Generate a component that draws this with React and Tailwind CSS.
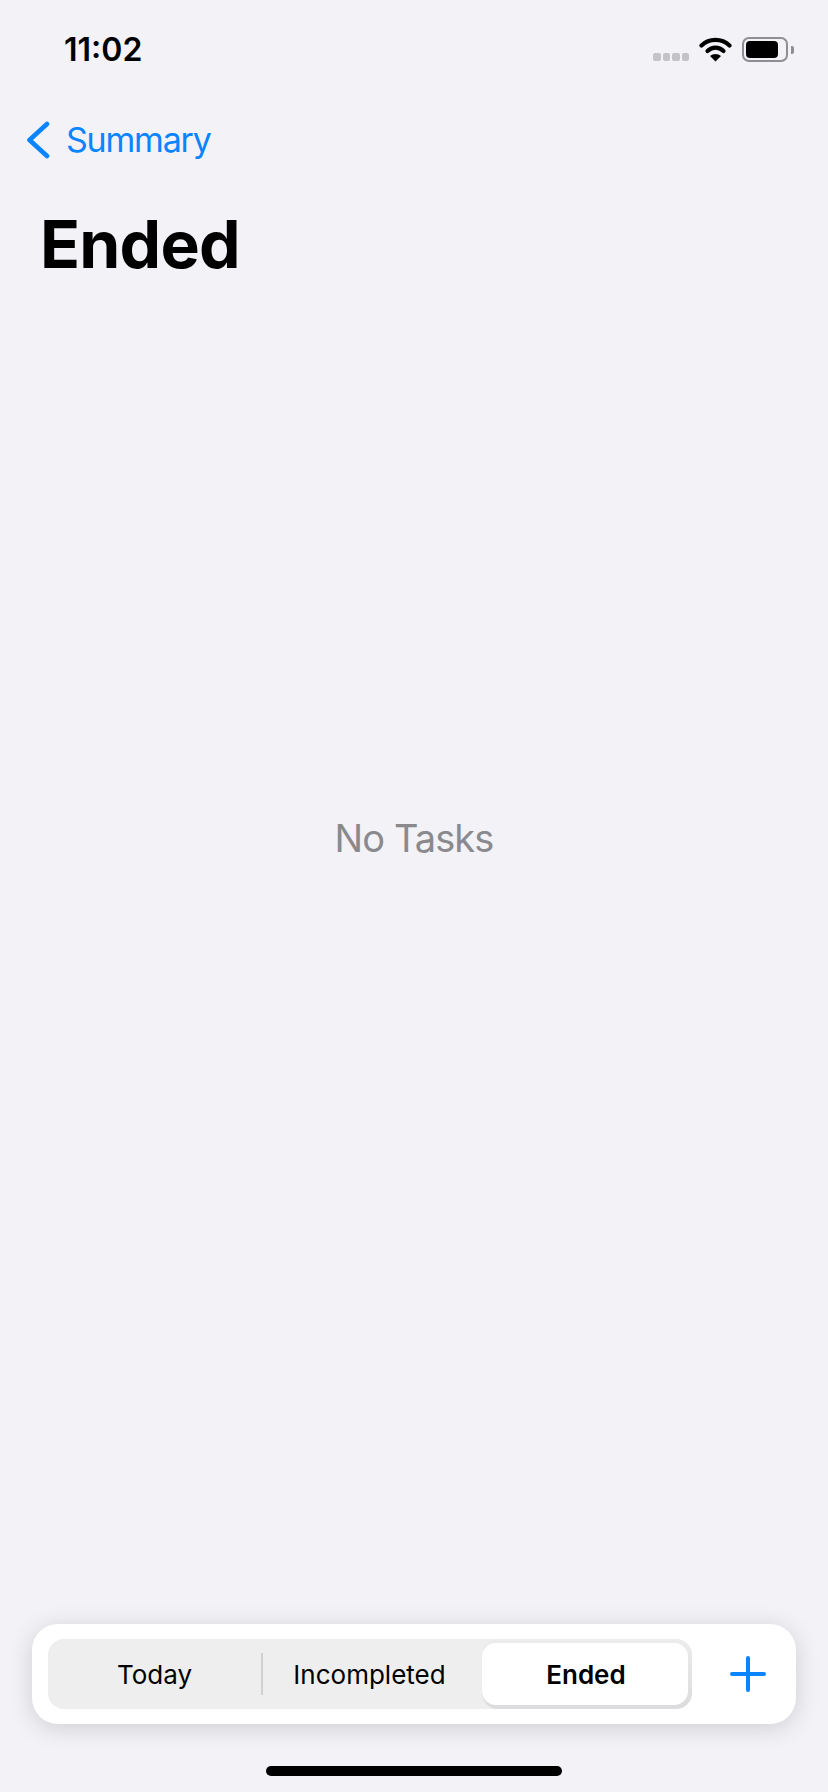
const font = "font-['Inter','Liberation_Sans',sans-serif]";

const Signal = () => (
  <div className="flex gap-[2px] mt-[17px]">
    <span className="w-[7.5px] h-2 rounded-[2px] bg-[#c4c4c8]" />
    <span className="w-[7.5px] h-2 rounded-[2px] bg-[#c4c4c8]" />
    <span className="w-[7.5px] h-2 rounded-[2px] bg-[#c4c4c8]" />
    <span className="w-[7.5px] h-2 rounded-[2px] bg-[#c4c4c8]" />
  </div>
);

const Wifi = () => (
  <svg width="33" height="26" viewBox="0 0 33 26" fill="none">
    <path d="M2.5 9.5C10.2 2 22.8 2 30.5 9.5" stroke="#000" strokeWidth="4.2" strokeLinecap="round" />
    <path d="M8.5 15C13.2 10.5 19.8 10.5 24.5 15" stroke="#000" strokeWidth="4.2" strokeLinecap="round" />
    <path d="M16.5 25.5L11 20C14 17.3 19 17.3 22 20Z" fill="#000" />
  </svg>
);

const Battery = () => (
  <div className="flex items-center mt-[1px]">
    <div className="w-[46px] h-[25px] rounded-[7px] border-2 border-[#8e8e93] p-[2px] pr-[8px]">
      <div className="w-full h-full rounded-[4px] bg-black" />
    </div>
    <div className="w-[3px] h-2 ml-[3px] rounded-r-[2px] bg-[#8e8e93]" />
  </div>
);

const App = () => {
  return (
    <div className={`${font} w-[828px] h-[1792px] bg-[#f2f2f7] flex flex-col overflow-hidden`}>
      {/* status bar */}
      <div className="h-[100px] flex justify-between pl-[64px] pr-[34px] pt-[30px] shrink-0">
        <span className="text-[32px] leading-[40px] font-semibold text-black">11:02</span>
        <div className="flex items-start gap-[10px] pt-[6px]">
          <Signal />
          <Wifi />
          <Battery />
        </div>
      </div>

      {/* nav */}
      <div className="h-[80px] flex items-center pl-[26px] text-[#0a84ff] shrink-0">
        <svg width="24" height="38" viewBox="0 0 24 38" fill="none">
          <path d="M21 3L3.5 19L21 35" stroke="#0a84ff" strokeWidth="4.6" strokeLinecap="round" strokeLinejoin="round" />
        </svg>
        <span className="ml-[16px] text-[34px] leading-[40px] tracking-[-1.2px]">Summary</span>
      </div>

      <h1 className="pl-[40px] mt-[29px] text-[66px] leading-[70px] font-bold tracking-[-0.8px] text-black shrink-0">Ended</h1>

      {/* empty state */}
      <div className="flex-1 flex items-center justify-center pb-[227px]">
        <span className="text-[38px] leading-[46px] tracking-[-0.9px] text-[#8a8a8e]">No Tasks</span>
      </div>

      {/* bottom toolbar */}
      <div className="mx-8 h-[100px] rounded-[26px] bg-white shadow-[0_4px_24px_rgba(0,0,0,0.15)] flex items-center pl-4 shrink-0">
        <div className="w-[644px] h-[70px] rounded-[16px] bg-[#eeeeef] flex items-center">
          <div className="w-[213px] text-center text-[26px] text-black">Today</div>
          <div className="w-[2px] h-[42px] bg-[#d0d0d3]" />
          <div className="w-[219px] pr-[6px] text-center text-[26px] text-black">Incompleted</div>
          <div className="w-[210px] h-[70px] rounded-[16px] bg-linear-to-b from-[#ececed] to-[#dcdcde] flex items-start pt-[4px]">
            <div className="w-[206px] h-[62px] pl-[2px] rounded-[14px] bg-white flex items-center justify-center text-[26px] font-semibold text-black">
              Ended
            </div>
          </div>
        </div>
        <div className="flex-1 flex items-center justify-center pl-[8px]">
          <svg width="36" height="36" viewBox="0 0 36 36" fill="none">
            <path d="M18 2V34M2 18H34" stroke="#0a84ff" strokeWidth="4" strokeLinecap="round" />
          </svg>
        </div>
      </div>

      {/* home indicator */}
      <div className="h-[68px] flex justify-center pt-[42px] shrink-0">
        <div className="w-[296px] h-[10px] rounded-full bg-black" />
      </div>
    </div>
  );
};

export default App;
